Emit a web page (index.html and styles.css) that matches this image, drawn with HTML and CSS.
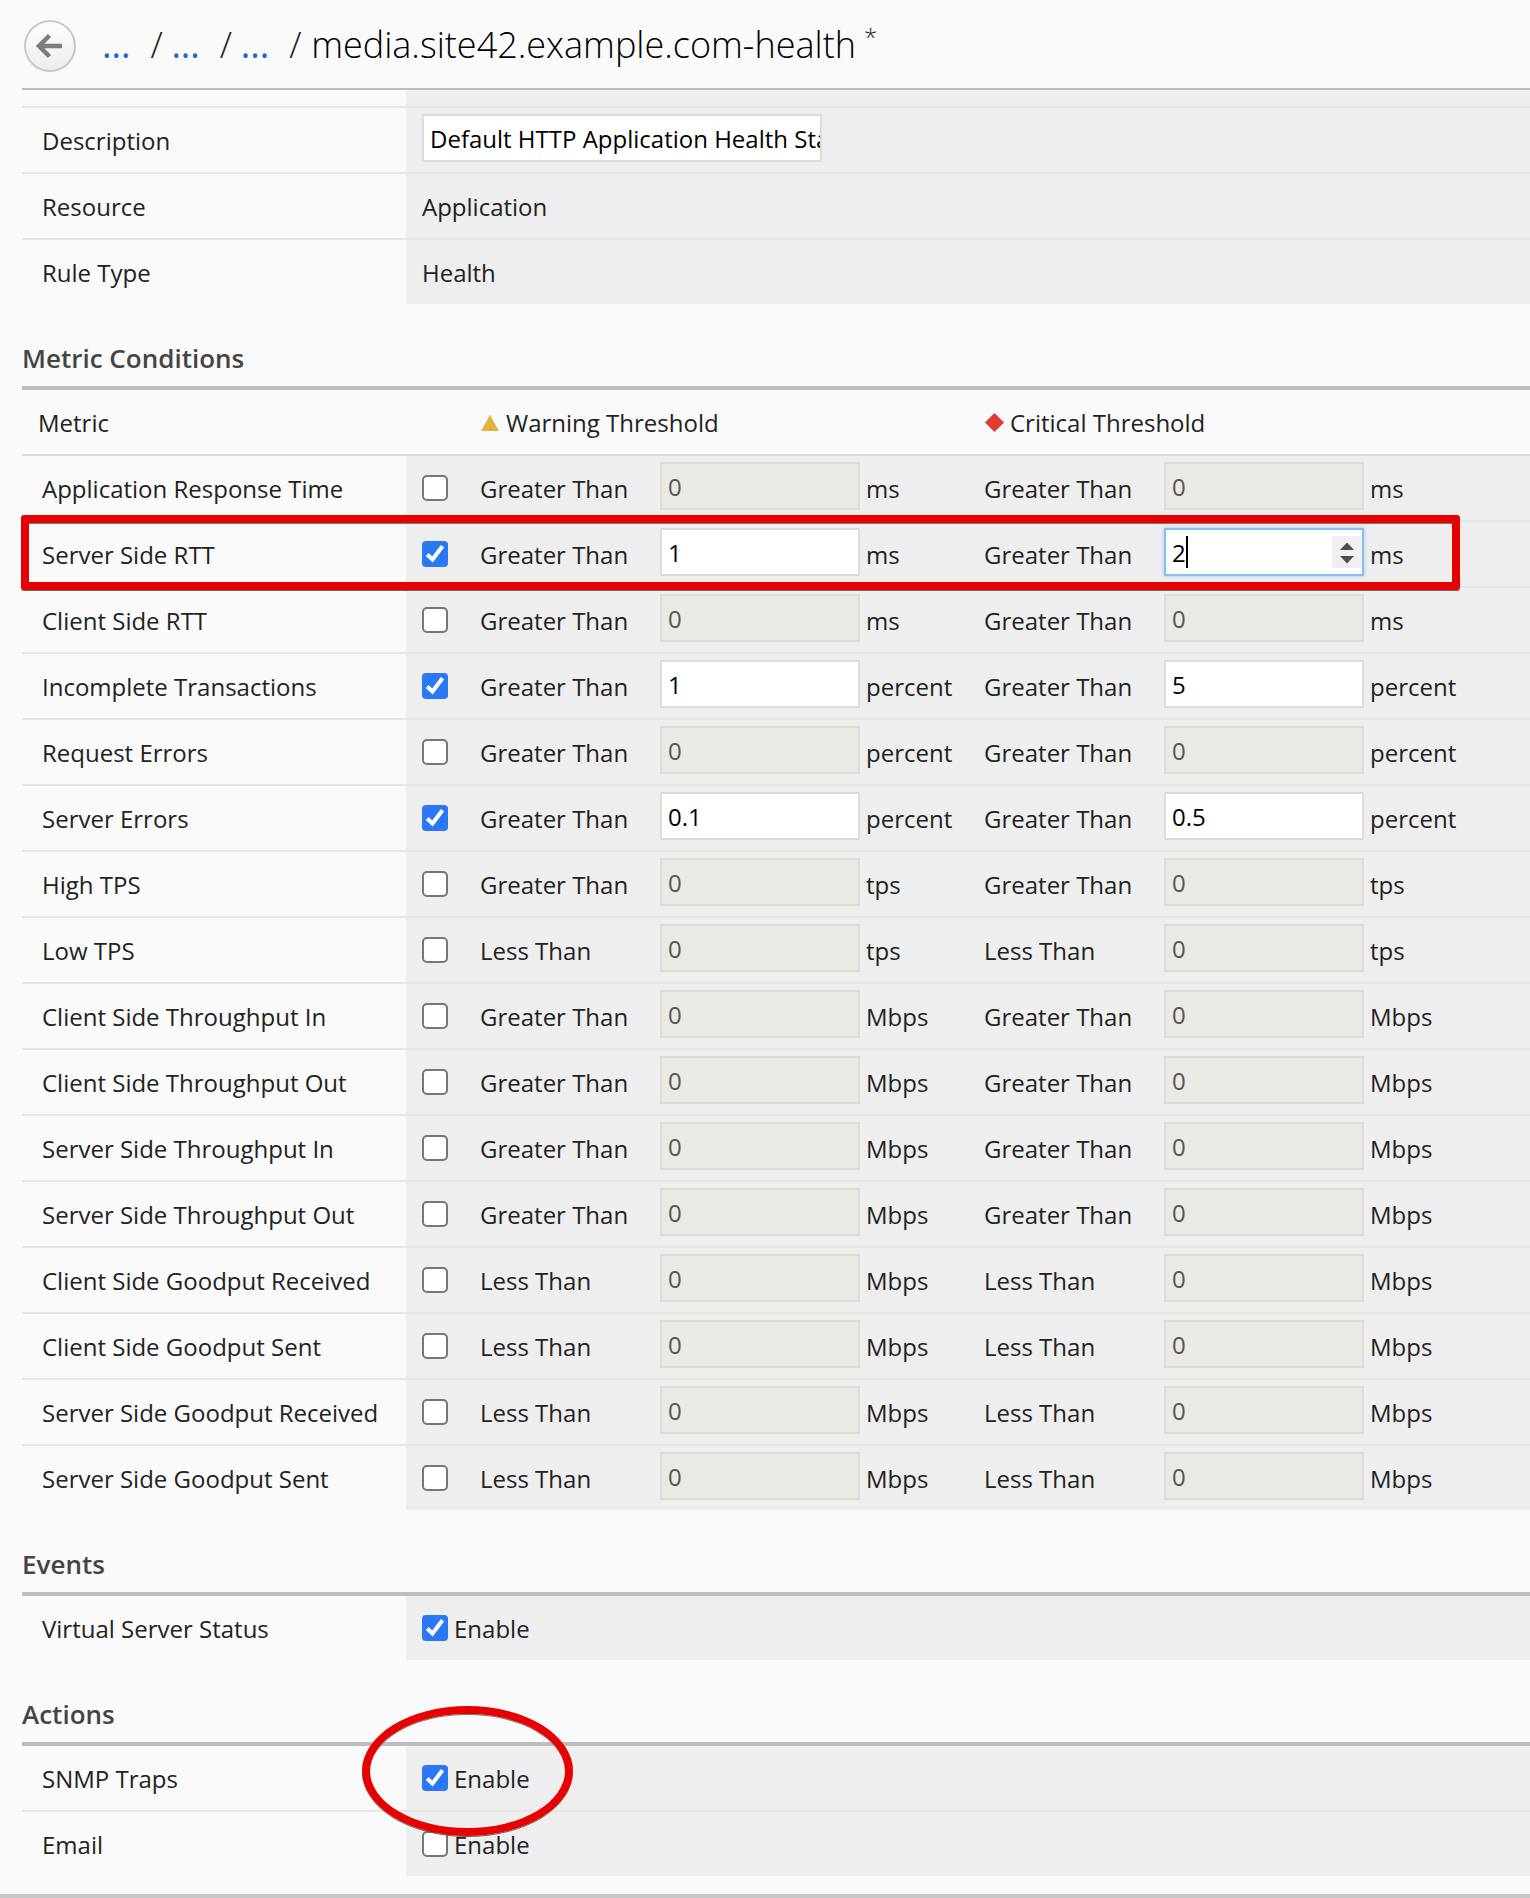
FILE: index.html
```html
<!DOCTYPE html>
<html lang="en">
<head>
<meta charset="utf-8">
<title>media.site42.example.com-health</title>
<link rel="stylesheet" href="styles.css">
</head>
<body>
<main class="page">
<header class="topbar">
  <button class="back" type="button" aria-label="Back">
    <svg width="52" height="52" viewBox="0 0 52 52" fill="none" stroke="#7c7c7c" stroke-width="4.500"><path d="M38 26H15.500M25.500 15.500L15 26L25.500 36.500" stroke-linejoin="miter"/></svg>
  </button>
  <nav class="crumbs">
    <a href="#">...</a><span class="slash">/</span>
    <a href="#">...</a><span class="slash">/</span>
    <a href="#">...</a><span class="slash">/</span>
  </nav>
  <h1 class="title">media.site42.example.com-health</h1>
  <span class="dirty">*</span>
</header>

<table class="form">
  <tr class="cut"><th></th><td></td></tr>
  <tr><th scope="row"><label for="desc">Description</label></th><td><input class="field wide" id="desc" type="text" value="Default HTTP Application Health Status"></td></tr>
  <tr><th scope="row">Resource</th><td>Application</td></tr>
  <tr><th scope="row">Rule Type</th><td>Health</td></tr>
</table>

<h2 class="section">Metric Conditions</h2>
<table class="form metrics">
  <colgroup><col class="c-name"><col class="c-check"><col class="c-warn"><col></colgroup>
  <thead>
    <tr>
      <th scope="col">Metric</th><th></th>
      <th scope="col"><svg class="mark" width="20" height="20" viewBox="0 0 20 20"><path d="M10 2L19 18H1Z" fill="#e3b142"/></svg>Warning Threshold</th>
      <th scope="col"><svg class="mark" width="20" height="20" viewBox="0 0 20 20"><path d="M10.500 0L20 9.500L10.500 19L1 9.500Z" fill="#e03c31"/></svg>Critical Threshold</th>
    </tr>
  </thead>
  <tbody>
    <tr><th scope="row"><label for="m1">Application Response Time</label></th><td><input type="checkbox" id="m1"></td><td><label class="cond"><span class="op">Greater Than</span><input class="field" type="number" value="0" disabled>ms</label></td><td><label class="cond"><span class="op">Greater Than</span><input class="field" type="number" value="0" disabled>ms</label></td></tr>
    <tr class="anchor"><th scope="row"><span class="callout box"></span><label for="m2">Server Side RTT</label></th><td><input type="checkbox" id="m2" checked></td><td><label class="cond"><span class="op">Greater Than</span><input class="field" type="number" value="1">ms</label></td><td><label class="cond"><span class="op">Greater Than</span><span class="active"><input class="field" type="number" value="2"><span class="caret"></span><svg class="spin" width="30" height="32" viewBox="0 0 30 32"><path d="M0 0H30V32H0Z" fill="#f0f0f0"/><path d="M15 6.500L22 14H8ZM15 27.500L22 20H8Z" fill="#4d4d4d"/></svg></span>ms</label></td></tr>
    <tr><th scope="row"><label for="m3">Client Side RTT</label></th><td><input type="checkbox" id="m3"></td><td><label class="cond"><span class="op">Greater Than</span><input class="field" type="number" value="0" disabled>ms</label></td><td><label class="cond"><span class="op">Greater Than</span><input class="field" type="number" value="0" disabled>ms</label></td></tr>
    <tr><th scope="row"><label for="m4">Incomplete Transactions</label></th><td><input type="checkbox" id="m4" checked></td><td><label class="cond"><span class="op">Greater Than</span><input class="field" type="number" value="1">percent</label></td><td><label class="cond"><span class="op">Greater Than</span><input class="field" type="number" value="5">percent</label></td></tr>
    <tr><th scope="row"><label for="m5">Request Errors</label></th><td><input type="checkbox" id="m5"></td><td><label class="cond"><span class="op">Greater Than</span><input class="field" type="number" value="0" disabled>percent</label></td><td><label class="cond"><span class="op">Greater Than</span><input class="field" type="number" value="0" disabled>percent</label></td></tr>
    <tr><th scope="row"><label for="m6">Server Errors</label></th><td><input type="checkbox" id="m6" checked></td><td><label class="cond"><span class="op">Greater Than</span><input class="field" type="number" step="0.1" value="0.1">percent</label></td><td><label class="cond"><span class="op">Greater Than</span><input class="field" type="number" step="0.1" value="0.5">percent</label></td></tr>
    <tr><th scope="row"><label for="m7">High TPS</label></th><td><input type="checkbox" id="m7"></td><td><label class="cond"><span class="op">Greater Than</span><input class="field" type="number" value="0" disabled>tps</label></td><td><label class="cond"><span class="op">Greater Than</span><input class="field" type="number" value="0" disabled>tps</label></td></tr>
    <tr><th scope="row"><label for="m8">Low TPS</label></th><td><input type="checkbox" id="m8"></td><td><label class="cond"><span class="op">Less Than</span><input class="field" type="number" value="0" disabled>tps</label></td><td><label class="cond"><span class="op">Less Than</span><input class="field" type="number" value="0" disabled>tps</label></td></tr>
    <tr><th scope="row"><label for="m9">Client Side Throughput In</label></th><td><input type="checkbox" id="m9"></td><td><label class="cond"><span class="op">Greater Than</span><input class="field" type="number" value="0" disabled>Mbps</label></td><td><label class="cond"><span class="op">Greater Than</span><input class="field" type="number" value="0" disabled>Mbps</label></td></tr>
    <tr><th scope="row"><label for="m10">Client Side Throughput Out</label></th><td><input type="checkbox" id="m10"></td><td><label class="cond"><span class="op">Greater Than</span><input class="field" type="number" value="0" disabled>Mbps</label></td><td><label class="cond"><span class="op">Greater Than</span><input class="field" type="number" value="0" disabled>Mbps</label></td></tr>
    <tr><th scope="row"><label for="m11">Server Side Throughput In</label></th><td><input type="checkbox" id="m11"></td><td><label class="cond"><span class="op">Greater Than</span><input class="field" type="number" value="0" disabled>Mbps</label></td><td><label class="cond"><span class="op">Greater Than</span><input class="field" type="number" value="0" disabled>Mbps</label></td></tr>
    <tr><th scope="row"><label for="m12">Server Side Throughput Out</label></th><td><input type="checkbox" id="m12"></td><td><label class="cond"><span class="op">Greater Than</span><input class="field" type="number" value="0" disabled>Mbps</label></td><td><label class="cond"><span class="op">Greater Than</span><input class="field" type="number" value="0" disabled>Mbps</label></td></tr>
    <tr><th scope="row"><label for="m13">Client Side Goodput Received</label></th><td><input type="checkbox" id="m13"></td><td><label class="cond"><span class="op">Less Than</span><input class="field" type="number" value="0" disabled>Mbps</label></td><td><label class="cond"><span class="op">Less Than</span><input class="field" type="number" value="0" disabled>Mbps</label></td></tr>
    <tr><th scope="row"><label for="m14">Client Side Goodput Sent</label></th><td><input type="checkbox" id="m14"></td><td><label class="cond"><span class="op">Less Than</span><input class="field" type="number" value="0" disabled>Mbps</label></td><td><label class="cond"><span class="op">Less Than</span><input class="field" type="number" value="0" disabled>Mbps</label></td></tr>
    <tr><th scope="row"><label for="m15">Server Side Goodput Received</label></th><td><input type="checkbox" id="m15"></td><td><label class="cond"><span class="op">Less Than</span><input class="field" type="number" value="0" disabled>Mbps</label></td><td><label class="cond"><span class="op">Less Than</span><input class="field" type="number" value="0" disabled>Mbps</label></td></tr>
    <tr><th scope="row"><label for="m16">Server Side Goodput Sent</label></th><td><input type="checkbox" id="m16"></td><td><label class="cond"><span class="op">Less Than</span><input class="field" type="number" value="0" disabled>Mbps</label></td><td><label class="cond"><span class="op">Less Than</span><input class="field" type="number" value="0" disabled>Mbps</label></td></tr>
  </tbody>
</table>

<h2 class="section">Events</h2>
<table class="form">
  <tr><th scope="row">Virtual Server Status</th><td><label class="enable"><input type="checkbox" checked>Enable</label></td></tr>
</table>

<h2 class="section">Actions</h2>
<table class="form">
  <tr class="anchor"><th scope="row"><span class="callout ring"></span>SNMP Traps</th><td><label class="enable"><input type="checkbox" checked>Enable</label></td></tr>
  <tr><th scope="row">Email</th><td><label class="enable"><input type="checkbox">Enable</label></td></tr>
</table>
</main>
<footer class="bottom"></footer>
</body>
</html>
```
FILE: styles.css
```css
* {
  box-sizing: border-box;
}

body {
  margin: 0;
  background: #fafafa;
  color: #222;
  font: 24px/32px "Open Sans", "Noto Sans", sans-serif;
}

.page {
  padding-left: 22px;
  overflow-x: clip;
}

/* Top bar */
.topbar {
  display: flex;
  align-items: center;
  height: 90px;
  padding-top: 2px;
  border-bottom: 2px solid #bdbdbd;
  font-size: 36px;
  line-height: 48px;
  font-weight: 300;
}

.back {
  flex: none;
  width: 52px;
  height: 52px;
  margin: 2px 26px 0 2px;
  padding: 0;
  border: 0;
  border-radius: 50%;
  background: linear-gradient(#fff, #ececec);
  box-shadow: inset 0 0 0 2px #c8c8c8;
}

.back svg {
  display: block;
}

.crumbs {
  display: flex;
}

.crumbs a {
  color: #2467cc;
  font-weight: 400;
  text-decoration: none;
}

.slash {
  width: 21px;
  margin-left: 20px;
}

.title {
  margin: 0 0 0 1px;
  color: #000;
  font-size: 36px;
  font-weight: 300;
}

.dirty {
  align-self: flex-start;
  margin-left: 8px;
  padding-top: 19px;
  font-size: 24px;
  line-height: 32px;
}

/* Form tables */
.form {
  width: 100%;
  border-collapse: separate;
  border-spacing: 0;
  table-layout: fixed;
}

.form th,
.form td {
  height: 66px;
  padding: 2px 0 0 16px;
  border-bottom: 2px solid #e6e6e6;
  font-weight: 400;
  text-align: left;
  vertical-align: middle;
}

.form th[scope="row"],
.form th:first-child {
  width: 384px;
  padding-left: 20px;
}

.form td {
  background: #eee;
}

.form .cut th,
.form .cut td {
  height: 18px;
}

.form tr:last-child > * {
  height: 64px;
  border-bottom: 0;
}

.form thead tr:last-child > * {
  height: 66px;
  border-bottom: 2px solid #dcdcdc;
}

.metrics thead th:first-child {
  padding-left: 16px;
}

.c-name {
  width: 384px;
}

.c-check {
  width: 58px;
}

.c-warn {
  width: 504px;
}

.mark {
  margin-right: 6px;
  vertical-align: -1px;
}

.section {
  margin: 0;
  padding: 34px 0 8px;
  border-bottom: 4px solid #bdbdbd;
  color: #444;
  font-size: 26px;
  line-height: 40px;
  font-weight: 600;
}

/* Controls */
.field {
  display: block;
  width: 200px;
  height: 48px;
  margin: 0 0 6px;
  padding: 0 0 0 6px;
  border: 2px solid #dcdcdc;
  border-radius: 0;
  background: #fff;
  color: #000;
  font: inherit;
  appearance: textfield;
}

.field.wide {
  width: 400px;
}

.field:disabled {
  background: #e9eae3;
  color: #555;
}

.cond {
  display: flex;
  align-items: center;
}

.op {
  width: 180px;
}

.cond .field {
  margin-right: 6px;
}

.active {
  position: relative;
}

.active .field {
  border-color: #8abdf2;
  box-shadow: 0 0 4px #a9cdf3;
}

.caret {
  position: absolute;
  top: 8px;
  left: 22px;
  width: 2px;
  height: 32px;
  background: #000;
}

.spin {
  position: absolute;
  top: 8px;
  left: 168px;
}

input[type="checkbox"] {
  display: block;
  width: 26px;
  height: 26px;
  margin: 0 0 2px;
  border: 2px solid #767676;
  border-radius: 5px;
  background: #fff;
  appearance: none;
}

input[type="checkbox"]:checked {
  border: 0;
  border-radius: 4px;
  background: #2a78f6 url("data:image/svg+xml,%3Csvg xmlns='http://www.w3.org/2000/svg' viewBox='0 0 26 26'%3E%3Cpath d='M5.200 13.500L10.500 18.500L20.500 5.200' fill='none' stroke='%23fff' stroke-width='4'/%3E%3C/svg%3E");
}

.enable {
  display: flex;
  align-items: center;
  gap: 6px;
}

/* Red annotations drawn over the rows */
.anchor {
  position: relative;
}

.callout {
  position: absolute;
  z-index: 1;
  border: 8px solid #e60202;
  box-shadow: 0 1px 0 #666, inset 0 1px 0 #777;
  pointer-events: none;
}

.box {
  top: -7px;
  left: -1px;
  width: 1439px;
  height: 75px;
  border-radius: 3px;
}

.ring {
  top: -40px;
  left: 340px;
  width: 211px;
  height: 130px;
  border-radius: 50%;
}

.bottom {
  margin-top: 18px;
  height: 4px;
  background: #c8c8c8;
}
```
